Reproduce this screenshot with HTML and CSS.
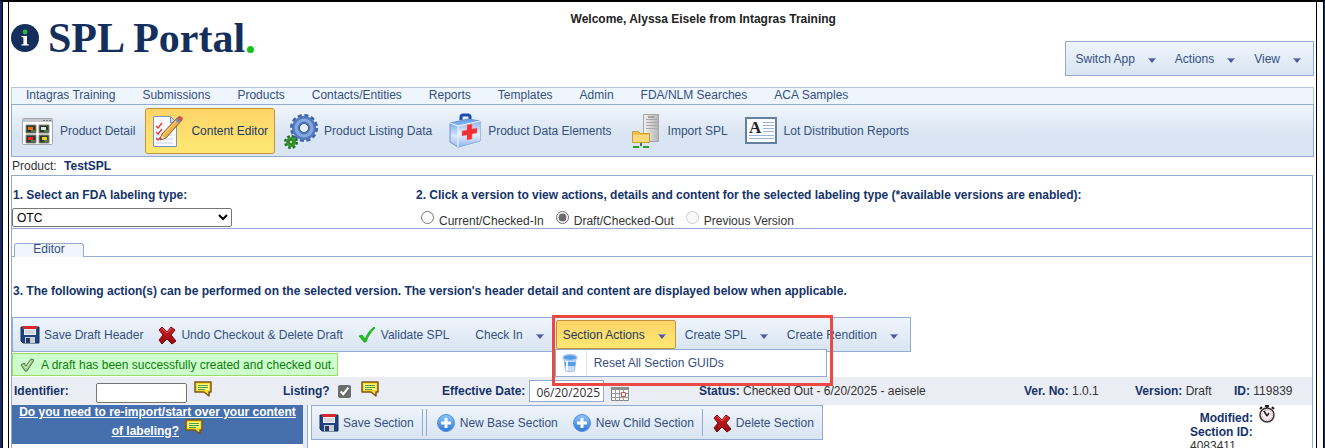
FILE: index.html
```html
<!DOCTYPE html>
<html lang="en">
<head>
    <meta charset="UTF-8">
    <meta name="viewport" content="width=device-width, initial-scale=1.0">
    <title>SPL Portal</title>
    <link rel="stylesheet" href="styles.css">
</head>
<body>
    <!-- Shared icons -->
    <svg class="icon-defs" aria-hidden="true">
        <defs>
            <linearGradient id="redGrad" x1="0" y1="0" x2="0" y2="1">
                <stop offset="0" stop-color="#d8242a"/>
                <stop offset="1" stop-color="#8d0508"/>
            </linearGradient>
            <linearGradient id="blueGrad" x1="0" y1="0" x2="0" y2="1">
                <stop offset="0" stop-color="#8cc6fb"/>
                <stop offset="1" stop-color="#2c76d8"/>
            </linearGradient>
            <linearGradient id="caseGrad" x1="0" y1="0" x2="0" y2="1">
                <stop offset="0" stop-color="#5d9bea"/>
                <stop offset="0.6" stop-color="#d5e5fb"/>
                <stop offset="1" stop-color="#9fc0ee"/>
            </linearGradient>
            <linearGradient id="caseFront" x1="0" y1="0" x2="0" y2="1">
                <stop offset="0" stop-color="#8ab6f2"/>
                <stop offset="0.5" stop-color="#e9f2fe"/>
                <stop offset="1" stop-color="#8fb5ec"/>
            </linearGradient>
            <linearGradient id="metalGrad" x1="0" y1="0" x2="1" y2="0">
                <stop offset="0" stop-color="#f3f3f3"/>
                <stop offset="1" stop-color="#b4b4b4"/>
            </linearGradient>
        </defs>
        <symbol id="save" viewBox="0 0 20 20">
            <path d="M1 2h18v16H3l-2-2z" fill="#1d4383" stroke="#12305f"/>
            <path d="M4 2h12v8H4z" fill="#eef0f4"/>
            <path d="M3 1h14v3H3z" fill="#d8262d"/>
            <path d="M5 6h10M5 8h10" stroke="#b9bec9"/>
            <path d="M5 12h10v6H5z" fill="#c9ced8"/>
            <path d="M6 13h4v5H6z" fill="#263a5c"/>
        </symbol>
        <symbol id="delete" viewBox="0 0 20 20">
            <path d="M5 2l5 5 4-5 4 3-4 5 5 6-4 3-5-5-5 5-3-4 4-5-4-5z" fill="url(#redGrad)" stroke="#7b0808" stroke-linejoin="round"/>
            <path d="M5 3l5 5 4-5" fill="none" stroke="#e0595c"/>
        </symbol>
        <symbol id="check" viewBox="0 0 20 20">
            <path d="M2 11l3-1 3 4c2-5 5-9 9-12l1 1c-4 4-7 8-9 14H7z" fill="#1fc11f" stroke="#0fa512" stroke-width=".7"/>
        </symbol>
        <symbol id="plus" viewBox="0 0 20 20">
            <circle cx="10" cy="10" r="8.5" fill="url(#blueGrad)" stroke="#5b8fd8"/>
            <path d="M10 5v10M5 10h10" stroke="#fff" stroke-width="3"/>
        </symbol>
        <symbol id="note" viewBox="0 0 18 16">
            <path d="M1 1h16v10h-2v4l-5-4H1z" fill="#ffd92e" stroke="#7a5518" stroke-width="1.500" stroke-linejoin="round"/>
            <path d="M3 3h12v6H3z" fill="#fbf98a"/>
            <path d="M4 4.500h10M4 6.500h10M4 8.500h7" stroke="#55a03a"/>
        </symbol>
        <symbol id="arrow" viewBox="0 0 8 5">
            <path d="M0 0h8L4 5z" fill="#4d589f"/>
            <path d="M0 0h8L7 1H1z" fill="#8a93c6"/>
        </symbol>
    </svg>

    <div class="page">
        <header class="header">
            <div class="logo">
                <svg class="logo-mark" viewBox="0 0 28 28" aria-hidden="true">
                    <circle cx="14" cy="14" r="14" fill="#152f5c"/>
                    <circle cx="14" cy="8" r="2.4" fill="#2fb544"/>
                    <path d="M10.500 12h5.500v8l1.800.6v1h-7.300v-1l1.900-.6v-6.400l-1.900-.6z" fill="#fff"/>
                </svg>
                <span class="logo-text">SPL Portal</span><span class="logo-dot"></span>
            </div>
            <div class="welcome">Welcome, Alyssa Eisele from Intagras Training</div>
            <div class="toolbar">
                <button class="tool drop">Switch App <svg class="arrow"><use href="#arrow"/></svg></button>
                <button class="tool drop">Actions <svg class="arrow"><use href="#arrow"/></svg></button>
                <button class="tool drop">View <svg class="arrow"><use href="#arrow"/></svg></button>
            </div>
        </header>

        <nav class="main-nav">
            <a href="#">Intagras Training</a>
            <a href="#">Submissions</a>
            <a href="#">Products</a>
            <a href="#">Contacts/Entities</a>
            <a href="#">Reports</a>
            <a href="#">Templates</a>
            <a href="#">Admin</a>
            <a href="#">FDA/NLM Searches</a>
            <a href="#">ACA Samples</a>
        </nav>

        <nav class="sub-nav">
            <a href="#">
                <svg viewBox="0 0 32 32">
                    <rect x="1.500" y="3.500" width="30" height="26" rx="1" fill="#fdfdfd" stroke="#a3a6ab"/>
                    <path d="M2 4h29v3H2z" fill="#c3c7cd"/>
                    <path d="M22 5.500h2M25 5.500h2M28 5.500h2" stroke="#777"/>
                    <path d="M5 10h10v8H5zM18 10h10v8H18zM5 20h10v8H5zM18 20h10v8H18z" fill="#2c3a2e" stroke="#8c8c84"/>
                    <path d="M7 12h5v3H7z" fill="#e87511"/>
                    <path d="M20 12h5v3h-5z" fill="#dfe5da"/>
                    <path d="M7 22h5v3H7z" fill="#ea2727"/>
                    <path d="M21 22h5v3h-5z" fill="#ecd81b"/>
                    <path d="M10 15h4v2h-4zM23 15h4v2h-4zM10 25h4v2h-4zM23 25h4v2h-4z" fill="#55794c"/>
                </svg>
                Product Detail
            </a>
            <a href="#" class="active">
                <svg viewBox="0 0 32 32">
                    <path d="M1.500 1.500h17l6 6v24h-23z" fill="#f8fafe" stroke="#7d94bd"/>
                    <path d="M18.500 1.500v6h6z" fill="#cbd9ee" stroke="#7d94bd"/>
                    <path d="M4 20h16M4 24h17M4 28h17" stroke="#c5d2e6"/>
                    <path d="M4 11l2 2 4-5M4 17l2 2 4-5M4 23l2 2 4-4" fill="none" stroke="#e04248" stroke-width="1.500"/>
                    <path d="M8 25l2-6L25 3l4 3-15 17z" fill="#f0b04a" stroke="#8a5a1b"/>
                    <path d="M11 20L26 4" stroke="#ffe0a0"/>
                    <path d="M8 25l2-5 3 3z" fill="#f2dcb4"/>
                    <path d="M8 25l1-2 1 1z" fill="#222"/>
                    <path d="M23 5l2-2 4 3-2 3z" fill="#7b92a0"/>
                    <path d="M25 3l2-2q3 0 4 3l-2 3z" fill="#c8535c"/>
                </svg>
                Content Editor
            </a>
            <a href="#">
                <svg viewBox="0 0 32 32" overflow="visible">
                    <circle cx="19" cy="13" r="12" fill="none" stroke="#3f62a4" stroke-width="4" stroke-dasharray="3.800 2.483"/>
                    <circle cx="19" cy="13" r="8" fill="none" stroke="#5279bf" stroke-width="8"/>
                    <circle cx="19" cy="13" r="8" fill="none" stroke="#86a8de" stroke-width="3"/>
                    <circle cx="19" cy="13" r="4.500" fill="#e7effa" stroke="#3b5a98"/>
                    <circle cx="6" cy="27" r="5.500" fill="none" stroke="#1d6a1e" stroke-width="3" stroke-dasharray="2.500 1.820"/>
                    <circle cx="6" cy="27" r="5" fill="#39962f"/>
                    <circle cx="6" cy="27" r="2" fill="#b9e3a7" stroke="#175918"/>
                </svg>
                Product Listing Data
            </a>
            <a href="#">
                <svg viewBox="0 0 32 32" overflow="visible">
                    <path d="M12 5V2q0-2 2-2h5q2 0 2 2v3" fill="none" stroke="#1d4bae" stroke-width="3"/>
                    <path d="M1 8l18-4 12 2v20L9 32l-8-5z" fill="url(#caseGrad)" stroke="#6f94cd" stroke-linejoin="round"/>
                    <path d="M9 11l22-5v20L9 32z" fill="url(#caseFront)"/>
                    <path d="M1 8l8 3v21M9 11l22-5" fill="none" stroke="#f3f8ff"/>
                    <path d="M18 10l5-1v5l5-1v5l-5 1v5l-5 1v-5l-5 1v-5l5-1z" fill="#ef2f32" stroke="#f47b7b" stroke-width=".5"/>
                </svg>
                Product Data Elements
            </a>
            <a href="#">
                <svg viewBox="0 0 32 32" overflow="visible">
                    <path d="M14.500-.5h15v27h-15z" fill="url(#metalGrad)" stroke="#a5a5a5"/>
                    <path d="M17 4.500h11M17 7.500h11M17 10.500h11M17 13.500h11" stroke="#a8a8a8"/>
                    <path d="M19 2h6" stroke="#777"/>
                    <path d="M3.500 16.500h6l2 2h9v9h-17z" fill="#f3c14d" stroke="#c99c38"/>
                    <path d="M4 20h16v7H4z" fill="#fbd87b"/>
                    <path d="M12 28v4" stroke="#5d6b65" stroke-width="2"/>
                    <path d="M4 32h16" stroke="#22a52a" stroke-width="2"/>
                    <path d="M10 32h4" stroke="#d0e8cf" stroke-width="2"/>
                </svg>
                Import SPL
            </a>
            <a href="#">
                <svg viewBox="0 0 32 32">
                    <path d="M1 3h30v25H1z" fill="#fafcff" stroke="#667f9f" stroke-width="2"/>
                    <path d="M18 7.500h11M18 10.500h11M18 13.500h11M18 16.500h11M4 20.500h25M4 23.500h25" stroke="#9db3d7"/>
                    <text x="4" y="18" class="icon-letter">A</text>
                </svg>
                Lot Distribution Reports
            </a>
        </nav>

        <div class="product">Product: <strong>TestSPL</strong></div>

        <main class="panel">
            <section class="choices">
                <div class="choice-type">
                    <label class="step" for="labelType">1. Select an FDA labeling type:</label>
                    <select id="labelType" class="type-select">
                        <option>OTC</option>
                    </select>
                </div>
                <div class="choice-version">
                    <div class="step">2. Click a version to view actions, details and content for the selected labeling type (*available versions are enabled):</div>
                    <div class="radios">
                        <label><input type="radio" name="version"><span>Current/Checked-In</span></label>
                        <label><input type="radio" name="version" checked><span>Draft/Checked-Out</span></label>
                        <label><input type="radio" name="version" disabled><span>Previous Version</span></label>
                    </div>
                </div>
            </section>

            <div class="tabs">
                <button class="tab">Editor</button>
            </div>

            <div class="step step-actions">3. The following action(s) can be performed on the selected version. The version's header detail and content are displayed below when applicable.</div>

            <div class="toolbar">
                <button class="tool"><svg class="icon"><use href="#save"/></svg>Save Draft Header</button>
                <button class="tool"><svg class="icon"><use href="#delete"/></svg>Undo Checkout &amp; Delete Draft</button>
                <button class="tool"><svg class="icon"><use href="#check"/></svg>Validate SPL</button>
                <button class="tool drop first-drop">Check In <svg class="arrow"><use href="#arrow"/></svg></button>
                <div class="open-menu">
                    <button class="tool drop active">Section Actions <svg class="arrow"><use href="#arrow"/></svg></button>
                    <div class="menu">
                        <button class="menu-item">
                            <span class="menu-icon">
                                <svg viewBox="0 0 16 20">
                                    <path d="M2 6h12l-1.500 12q-4.500 2-9 0z" fill="#c9dcf6" stroke="#a9c0e4"/>
                                    <path d="M2.500 9h11l-.4 4H3z" fill="#4f9fec"/>
                                    <path d="M5 8v10" stroke="#eef6ff" stroke-width="2"/>
                                    <ellipse cx="8" cy="4.500" rx="7" ry="3" fill="#4e9de8" stroke="#b4c6e6" stroke-width="1.500"/>
                                </svg>
                            </span>
                            Reset All Section GUIDs
                        </button>
                    </div>
                    <div class="highlight"></div>
                </div>
                <button class="tool drop">Create SPL <svg class="arrow"><use href="#arrow"/></svg></button>
                <button class="tool drop">Create Rendition <svg class="arrow"><use href="#arrow"/></svg></button>
            </div>

            <div class="message">
                <svg viewBox="0 0 14 14" aria-hidden="true">
                    <path d="M1 7l3-2 2 3 5-7 3 1-7 11H5z" fill="#9ccb86" stroke="#55754c" stroke-linejoin="round"/>
                    <path d="M3 7l3 3 5-7" fill="none" stroke="#d4efc6"/>
                </svg>
                A draft has been successfully created and checked out.
            </div>

            <div class="details">
                <div class="field">
                    <label class="identifier-label" for="identifier">Identifier:</label>
                    <input id="identifier" class="identifier" type="text">
                    <svg class="note"><use href="#note"/></svg>
                </div>
                <div class="field">
                    <label for="listing">Listing?</label>
                    <input id="listing" class="listing" type="checkbox" checked>
                    <svg class="note"><use href="#note"/></svg>
                </div>
                <div class="field">
                    <label for="effective">Effective Date:</label>
                    <input id="effective" class="date" type="text" value="06/20/2025">
                    <svg class="calendar" viewBox="0 0 18 14" aria-hidden="true">
                        <path d="M.5.5h17v13H.5z" fill="#fff" stroke="#858585"/>
                        <path d="M0 0h18v3H0z" fill="#8d8d8d"/>
                        <path d="M1 6.500h16M1 10.500h16M4.500 2v12M8.500 2v12M12.500 2v12" stroke="#999"/>
                        <path d="M10.500 5.500h4v4h-4z" fill="#fff" stroke="#e0483e"/>
                    </svg>
                </div>
                <div><strong>Status:</strong> Checked Out - 6/20/2025 - aeisele</div>
                <div><strong>Ver. No:</strong> 1.0.1</div>
                <div><strong>Version:</strong> Draft</div>
                <div><strong>ID:</strong> 119839</div>
            </div>

            <div class="content">
                <aside class="reimport">
                    <a href="#">Do you need to re-import/start over your content of labeling?</a>
                    <svg class="note"><use href="#note"/></svg>
                </aside>
                <div class="splitter"></div>
                <div class="section-area">
                    <div class="toolbar">
                        <button class="tool"><svg class="icon"><use href="#save"/></svg>Save Section</button>
                        <span class="separator"></span>
                        <span class="separator"></span>
                        <button class="tool"><svg class="icon"><use href="#plus"/></svg>New Base Section</button>
                        <button class="tool"><svg class="icon"><use href="#plus"/></svg>New Child Section</button>
                        <span class="separator"></span>
                        <button class="tool"><svg class="icon"><use href="#delete"/></svg>Delete Section</button>
                    </div>
                    <div class="section-info">
                        <div class="modified">
                            <strong>Modified:</strong>
                            <svg viewBox="0 0 18 18" aria-hidden="true">
                                <path d="M7 1h4M9 1v3M2 4l2-2M16 4l-2-2" stroke="#222" stroke-width="2"/>
                                <circle cx="9" cy="10" r="7" fill="#fbeef1" stroke="#333" stroke-width="1.500"/>
                                <circle cx="9" cy="10" r="5.200" fill="none" stroke="#b0687c" stroke-dasharray="1 1.720"/>
                                <path d="M9 11L6 6M9 11l2-3" stroke="#222" stroke-width="1.500"/>
                            </svg>
                        </div>
                        <strong>Section ID:</strong>
                        <div>4083411</div>
                    </div>
                </div>
            </div>
        </main>
    </div>
</body>
</html>
```
FILE: styles.css
```css
* {
    box-sizing: border-box;
}

body {
    margin: 0;
    padding: 0 2px 0 3px;
    height: 100vh;
    overflow: hidden;
    font-family: "Liberation Sans", Arial, sans-serif;
    font-size: 12px;
    line-height: 14px;
    color: #333;
    background-color: #fff;
    border-left: 2px solid #122d61;
    border-right: 1px solid #122d61;
    border-top: 2px solid #000;
    box-shadow: inset 1px 0 #000, inset -1px 0 #000;
}

button, input, select {
    font: inherit;
    margin: 0;
}

button {
    cursor: pointer;
}

a {
    color: #34507f;
    text-decoration: none;
}

strong, label, .step {
    color: #14336a;
    font-weight: bold;
}

.icon-defs {
    position: absolute;
    width: 0;
    height: 0;
}

.page {
    min-height: 100%;
    margin: 0 5px 0 3px;
    padding: 0 2px;
    border-left: 1px solid #000;
    border-right: 1px solid #000;
}

/* Header */
.header {
    display: flex;
    align-items: flex-start;
    height: 85px;
}

.logo {
    display: flex;
    align-items: center;
    width: 330px;
    padding-top: 12px;
}

.logo-mark {
    width: 28px;
    height: 28px;
    margin-right: 9px;
}

.logo-text {
    font-family: "Liberation Serif", serif;
    font-size: 42px;
    font-weight: bold;
    line-height: 48px;
    color: #152f5c;
}

.logo-dot {
    width: 7px;
    height: 7px;
    margin: 22px 0 0 2px;
    border-radius: 50%;
    background-color: #17c217;
}

.welcome {
    flex: 1;
    padding-top: 10px;
    text-align: center;
    font-weight: bold;
    color: #222;
}

.header .toolbar {
    margin-top: 39px;
    padding: 0 2px;
}

/* Toolbars */
.toolbar {
    display: inline-flex;
    align-items: center;
    gap: 2px;
    height: 35px;
    padding: 0 2px 0 1px;
    border: 1px solid #93abce;
    background: linear-gradient(#eff5fc, #d8e4f2);
}

.tool {
    display: flex;
    align-items: center;
    height: 29px;
    padding: 0 5px;
    border: 1px solid transparent;
    border-radius: 2px;
    background: none;
    color: #34507f;
    white-space: nowrap;
}

.tool.drop {
    padding: 0 9px 0 6px;
}

.tool.first-drop {
    margin-left: 11px;
}

.tool.active,
.sub-nav .active {
    border-color: #c59338;
    background: linear-gradient(#fdd468, #fee873);
    color: #233a63;
}

.icon {
    width: 20px;
    height: 20px;
    margin-right: 4px;
}

.arrow {
    width: 8px;
    height: 5px;
    margin: 3px 0 0 13px;
}

.separator {
    width: 1px;
    height: 27px;
    margin-right: 1px;
    background-color: #93abce;
}

/* Navigation */
.main-nav {
    display: flex;
    gap: 27px;
    height: 17px;
    padding: 0 14px;
    border: 1px solid #b3c6de;
    border-bottom: 0;
    background-color: #eff5fd;
}

.sub-nav {
    display: flex;
    align-items: center;
    gap: 3px;
    height: 53px;
    padding: 0 2px;
    border: 1px solid #93abce;
    background: linear-gradient(#eff5fc, #d9e5f2 60%);
}

.sub-nav a {
    display: flex;
    align-items: center;
    gap: 7px;
    height: 46px;
    padding: 0 6px;
    border: 1px solid transparent;
    border-radius: 3px;
}

.sub-nav svg {
    width: 32px;
    height: 32px;
}

.icon-letter {
    font-family: "Liberation Serif", serif;
    font-size: 17px;
    font-weight: bold;
    fill: #222;
}

.product {
    padding: 2px 1px;
}

.product strong {
    margin-left: 4px;
}

/* Panel */
.panel {
    border: 1px solid #93abce;
    margin-right: 1px;
}

.choices {
    display: flex;
    height: 53px;
    padding-top: 12px;
    border-bottom: 1px solid #93abce;
}

.choice-type {
    width: 403px;
}

.step {
    display: block;
    padding-left: 1px;
}

.type-select {
    width: 220px;
    height: 19px;
    margin-top: 6px;
    border: 1px solid #767676;
    border-radius: 2px;
    background-color: #fff;
    color: #000;
}

.radios {
    display: flex;
    gap: 12px;
    margin-top: 9px;
    padding-left: 6px;
}

.radios label {
    display: flex;
    align-items: flex-start;
    gap: 5px;
    color: #333;
    font-weight: normal;
}

.radios input,
.listing {
    width: 13px;
    height: 13px;
    accent-color: #6b6b6b;
}

.radios span {
    padding-top: 3px;
}

.tabs {
    display: flex;
    height: 28px;
    padding: 14px 2px 0;
    border-bottom: 1px solid #93abce;
}

.tab {
    width: 70px;
    height: 14px;
    padding: 0 0 2px;
    border: 1px solid #93abce;
    border-bottom: 0;
    border-radius: 3px 3px 0 0;
    background-color: #f1f6fd;
    color: #34507f;
    line-height: 11px;
}

.step-actions {
    margin: 27px 0 19px;
}

.open-menu {
    position: relative;
}

.menu {
    position: absolute;
    z-index: 1;
    top: 29px;
    left: -1px;
    width: 272px;
    border: 1px solid #93abce;
    background-color: #fff;
}

.menu-item {
    display: flex;
    align-items: center;
    width: 100%;
    height: 26px;
    padding: 0;
    border: 0;
    background: none;
    color: #34507f;
}

.menu-icon {
    width: 31px;
    height: 26px;
    margin-right: 7px;
    padding: 3px 0 0 6px;
    border-right: 1px solid #e2e6ec;
    text-align: left;
}

.menu-icon svg {
    width: 16px;
    height: 20px;
}

.highlight {
    position: absolute;
    z-index: 2;
    top: -5px;
    left: -4px;
    width: 281px;
    height: 71px;
    border: 3px solid #ea4a43;
    pointer-events: none;
}

.message {
    display: flex;
    align-items: center;
    gap: 7px;
    width: fit-content;
    height: 23px;
    margin-top: 1px;
    padding: 0 2px 0 7px;
    border: 1px solid #99dd66;
    background-color: #ccffcc;
    color: #0b7d0b;
}

.message svg {
    width: 14px;
    height: 14px;
}

/* Header details */
.details {
    display: grid;
    grid-template-columns: 269px 159px 257px 1fr 111px 99px 78px;
    align-items: center;
    height: 28px;
    margin-top: 1px;
    padding-left: 2px;
    background-color: #ebedf4;
}

.field {
    display: flex;
    align-items: center;
}

.identifier-label {
    width: 82px;
}

.note {
    width: 18px;
    height: 16px;
}

.field .note {
    margin: 0 0 4px 7px;
}

.identifier,
.date {
    border: 1px solid #767676;
    background-color: #fff;
}

.identifier {
    width: 91px;
    height: 20px;
    margin-top: 4px;
    border-radius: 2px;
}

.listing {
    margin-left: 8px;
}

.listing + .note {
    margin-left: 10px;
}

.date {
    width: 75px;
    height: 22px;
    margin-left: 4px;
    padding: 2px 0 0 6px;
    border-color: #93abce;
    font-family: "Open Sans", sans-serif;
    color: #333;
}

.calendar {
    width: 18px;
    height: 14px;
    margin: 5px 0 0 7px;
}

/* Content */
.content {
    display: flex;
    height: 60px;
}

.reimport {
    width: 291px;
    height: 39px;
    text-align: center;
    background-color: #466fae;
    font-weight: bold;
}

.reimport a {
    color: #fff;
    text-decoration: underline;
}

.reimport .note {
    margin-left: 3px;
}

.splitter {
    width: 5px;
    margin-right: 3px;
    border-right: 1px solid #93abce;
    background-color: #e4ecf6;
}

.section-area {
    display: flex;
    flex: 1;
    justify-content: space-between;
    align-items: flex-start;
}

.section-info {
    width: 122px;
}

.modified {
    display: flex;
    justify-content: flex-end;
    align-items: flex-end;
    gap: 5px;
    width: 86px;
    height: 20px;
}

.modified svg {
    width: 18px;
    height: 18px;
    margin-bottom: 2px;
}
```
